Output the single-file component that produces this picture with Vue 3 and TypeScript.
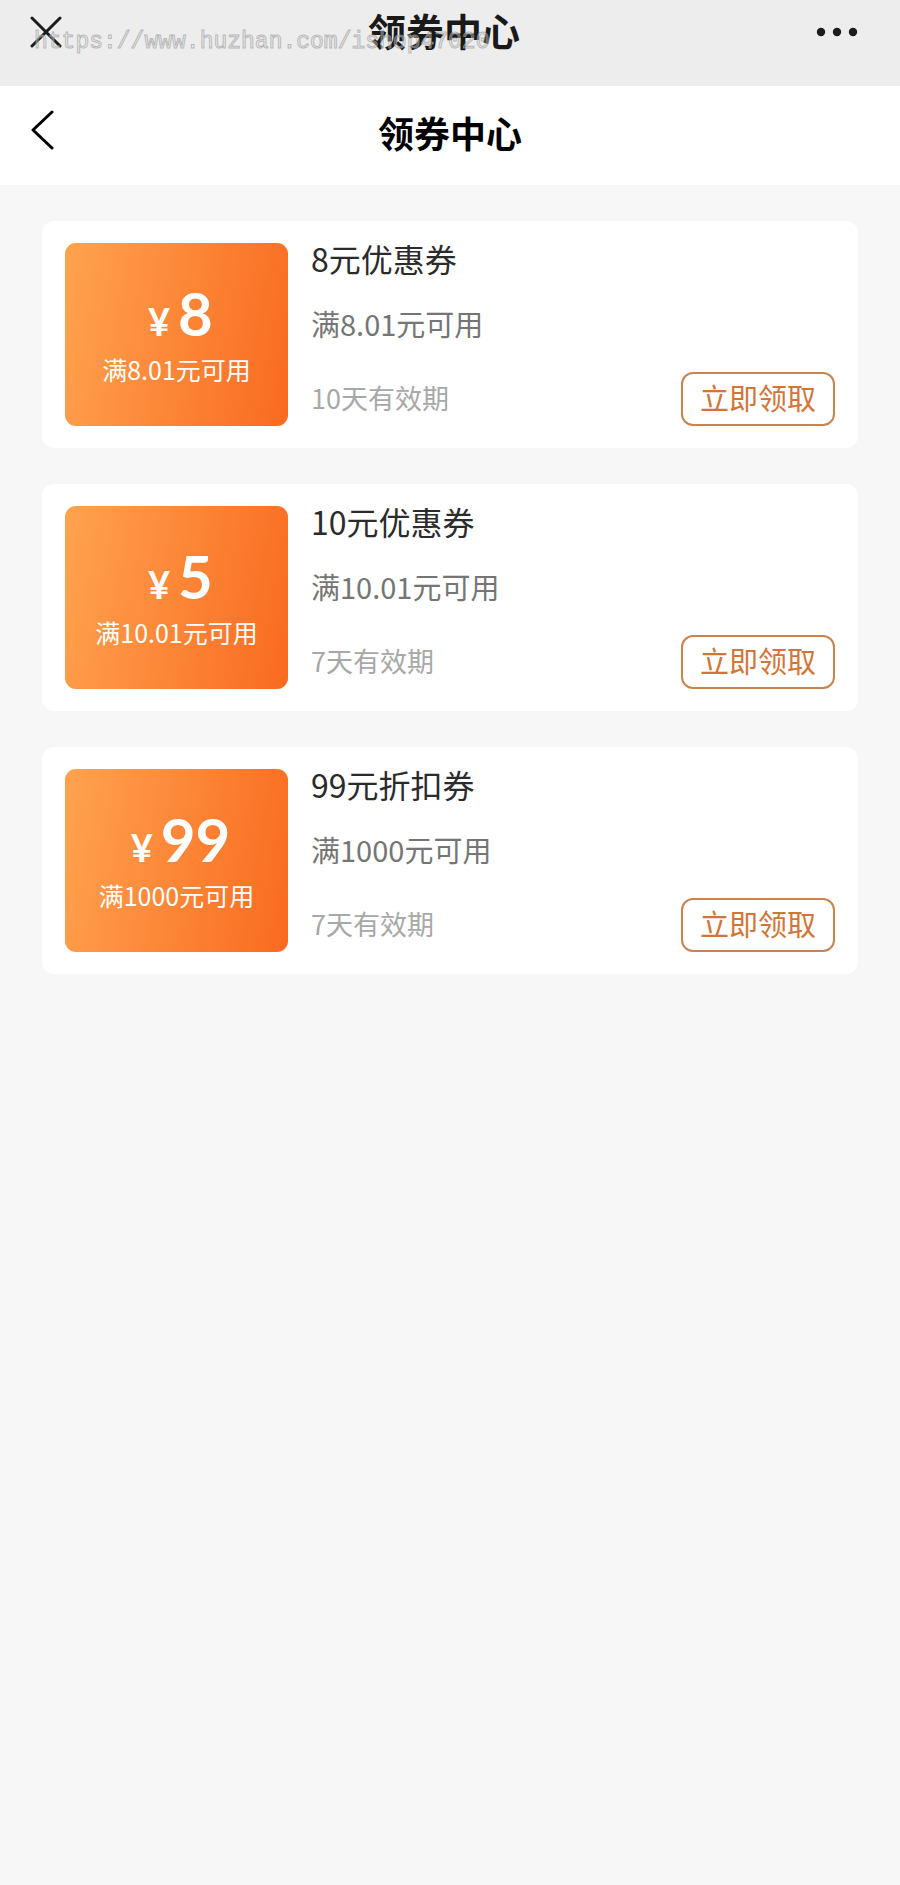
<script setup lang="ts">
interface Coupon {
  id: number
  amount: number
  name: string
  condition: string
  validity: string
}

const coupons: Coupon[] = [
  { id: 1, amount: 8, name: '8元优惠券', condition: '满8.01元可用', validity: '10天有效期' },
  { id: 2, amount: 5, name: '10元优惠券', condition: '满10.01元可用', validity: '7天有效期' },
  { id: 3, amount: 99, name: '99元折扣券', condition: '满1000元可用', validity: '7天有效期' },
]
</script>

<template>
  <div class="page">
    <header class="app-bar">
      <button class="icon-button" type="button" aria-label="关闭">
        <svg width="32" height="32" viewBox="0 0 32 32" fill="none" stroke="#1c1c1c" stroke-width="3" stroke-linecap="round">
          <path d="M2 2 L30 30 M30 2 L2 30" />
        </svg>
      </button>
      <div class="app-title">领券中心</div>
      <button class="icon-button more" type="button" aria-label="更多">
        <svg width="42" height="32" viewBox="0 0 42 32" fill="#1c1c1c">
          <circle cx="5" cy="16" r="4.2" />
          <circle cx="21" cy="16" r="4.2" />
          <circle cx="37" cy="16" r="4.2" />
        </svg>
      </button>
      <div class="watermark">https://www.huzhan.com/ishop47020</div>
    </header>

    <nav class="nav-bar">
      <button class="icon-button" type="button" aria-label="返回">
        <svg width="24" height="40" viewBox="0 0 24 40" fill="none" stroke="#000" stroke-width="3" stroke-linecap="round" stroke-linejoin="round">
          <path d="M21 2 L2 20 L21 38" />
        </svg>
      </button>
      <h1 class="nav-title">领券中心</h1>
    </nav>

    <main class="coupons">
      <article v-for="coupon in coupons" :key="coupon.id" class="coupon">
        <div class="ticket">
          <div class="price"><span class="currency">¥</span><span>{{ coupon.amount }}</span></div>
          <div class="ticket-condition">{{ coupon.condition }}</div>
        </div>
        <div class="details">
          <h2 class="name">{{ coupon.name }}</h2>
          <p class="condition">{{ coupon.condition }}</p>
          <div class="bottom">
            <span class="validity">{{ coupon.validity }}</span>
            <button class="claim" type="button">立即领取</button>
          </div>
        </div>
      </article>
    </main>
  </div>
</template>

<style>
body {
  margin: 0;
  background: #f7f7f7;
}
</style>

<style scoped>
.page {
  min-height: 100vh;
  background: #f7f7f7;
  font-family: "Noto Sans CJK SC", sans-serif;
}

.icon-button {
  display: flex;
  padding: 0;
  border: 0;
  background: none;
  cursor: pointer;
}

.app-bar {
  position: relative;
  display: grid;
  grid-template-columns: 1fr auto 1fr;
  align-items: center;
  box-sizing: border-box;
  height: 86px;
  padding: 0 42px 22px 30px;
  background: #ededed;
}

.more {
  justify-self: end;
}

.app-title {
  padding-bottom: 4px;
  font-size: 38px;
  font-weight: 700;
  line-height: 60px;
  color: #191919;
}

.watermark {
  position: absolute;
  left: 34px;
  top: 28px;
  font-family: "Liberation Mono", monospace;
  font-size: 23px;
  line-height: 28px;
  white-space: nowrap;
  color: rgba(237, 237, 237, 0.3);
  -webkit-text-stroke: 1px rgba(160, 160, 160, 0.7);
  pointer-events: none;
}

.nav-bar {
  display: grid;
  grid-template-columns: 1fr auto 1fr;
  align-items: center;
  height: 99px;
  padding: 0 31px;
  background: #fff;
}

.nav-bar .icon-button {
  justify-self: start;
  padding-bottom: 12px;
}

.nav-title {
  margin: 0;
  padding-bottom: 8px;
  font-size: 36px;
  font-weight: 700;
  line-height: 52px;
  color: #000;
}

.coupons {
  display: flex;
  flex-direction: column;
  gap: 36px;
  padding: 36px 42px;
}

.coupon {
  display: flex;
  gap: 23px;
  padding: 22px 23px;
  border-radius: 12px;
  background: #fff;
}

.ticket {
  display: flex;
  flex: 0 0 223px;
  flex-direction: column;
  align-items: center;
  justify-content: center;
  height: 183px;
  border-radius: 11px;
  background: linear-gradient(100deg, #ffa34e, #f96a20);
  color: #fff;
}

.price {
  display: flex;
  align-items: baseline;
  gap: 8px;
  padding-left: 8px;
  font-family: Lato, "Noto Sans CJK SC", sans-serif;
  font-size: 60px;
  font-weight: 700;
  line-height: 64px;
}

.currency {
  font-size: 38px;
}

.ticket-condition {
  padding-bottom: 4px;
  font-size: 25px;
  line-height: 32px;
}

.details {
  display: flex;
  flex: 1;
  flex-direction: column;
  justify-content: space-between;
  min-width: 0;
}

.name {
  margin: 0;
  font-size: 32px;
  font-weight: 400;
  line-height: 30px;
  color: #2b2b2b;
}

.condition {
  margin: 0;
  font-size: 29px;
  line-height: 36px;
  color: #757575;
}

.bottom {
  display: flex;
  align-items: center;
  justify-content: space-between;
}

.validity {
  padding-bottom: 4px;
  font-size: 27px;
  color: #a8a8a8;
}

.claim {
  padding: 0 17px 4px;
  border: 2px solid #c9834f;
  border-radius: 12px;
  background: #fff;
  color: #d17538;
  font-family: inherit;
  font-size: 29px;
  line-height: 46px;
  cursor: pointer;
}
</style>
